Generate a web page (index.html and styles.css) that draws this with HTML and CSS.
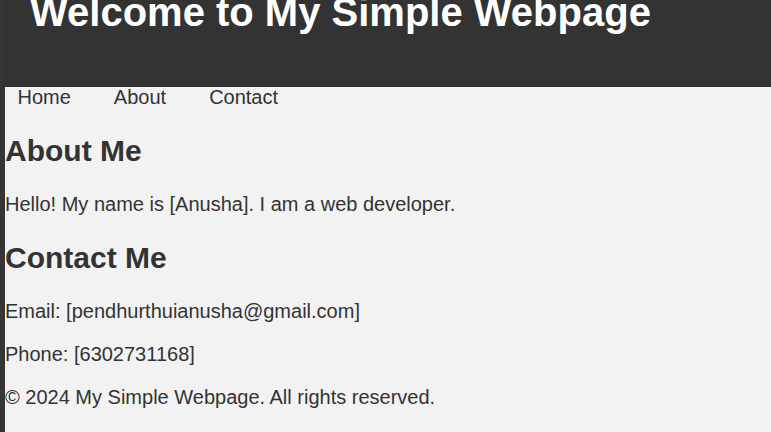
FILE: index.html
```html
<!DOCTYPE html>
<html lang="en">
<head>
<meta charset="utf-8">
<title>My Simple Webpage</title>
<link rel="stylesheet" href="styles.css">
</head>
<body>
<div class="frame">
  <div class="edge"></div>
  <div class="page">
    <header class="site-header">
      <h1 class="site-title">Welcome to My Simple Webpage</h1>
    </header>
    <nav class="site-nav">
      <a class="nav-link" href="#home">Home</a>
      <a class="nav-link" href="#about">About</a>
      <a class="nav-link" href="#contact">Contact</a>
    </nav>
    <main class="content">
      <section id="about">
        <h2 class="section-title">About Me</h2>
        <p class="text">Hello! My name is [Anusha]. I am a web developer.</p>
      </section>
      <section id="contact">
        <h2 class="section-title">Contact Me</h2>
        <p class="text">Email: [pendhurthuianusha@gmail.com]</p>
        <p class="text">Phone: [6302731168]</p>
      </section>
    </main>
    <footer class="site-footer">
      <p class="text">&copy; 2024 My Simple Webpage. All rights reserved.</p>
    </footer>
  </div>
</div>
</body>
</html>
```
FILE: styles.css
```css
html, body {
  margin: 0;
  padding: 0;
  height: 100%;
  overflow: hidden;
}
body {
  font-family: "Liberation Sans", Arial, sans-serif;
  font-size: 20px;
  color: #333;
  background: #f2f2f2;
}
.frame {
  display: flex;
  min-height: 100%;
}
.edge {
  width: 5px;
  flex: none;
  background: #353535;
}
.page {
  flex: 1;
  min-width: 0;
}
.site-header {
  background: #333;
  color: #fff;
  padding: 0 0 63px 25px;
}
.site-title {
  margin: 0;
  font-size: 40px;
  line-height: 24px;
  font-weight: bold;
}
.site-nav {
  display: flex;
  gap: 43px;
  padding-left: 12.5px;
  line-height: 21px;
  padding-bottom: 1px;
}
.nav-link {
  color: #333;
  text-decoration: none;
}
.section-title {
  font-size: 30px;
  margin: 25px 0;
  line-height: 34px;
}
.text {
  margin: 20px 0;
  line-height: 23px;
}
```
